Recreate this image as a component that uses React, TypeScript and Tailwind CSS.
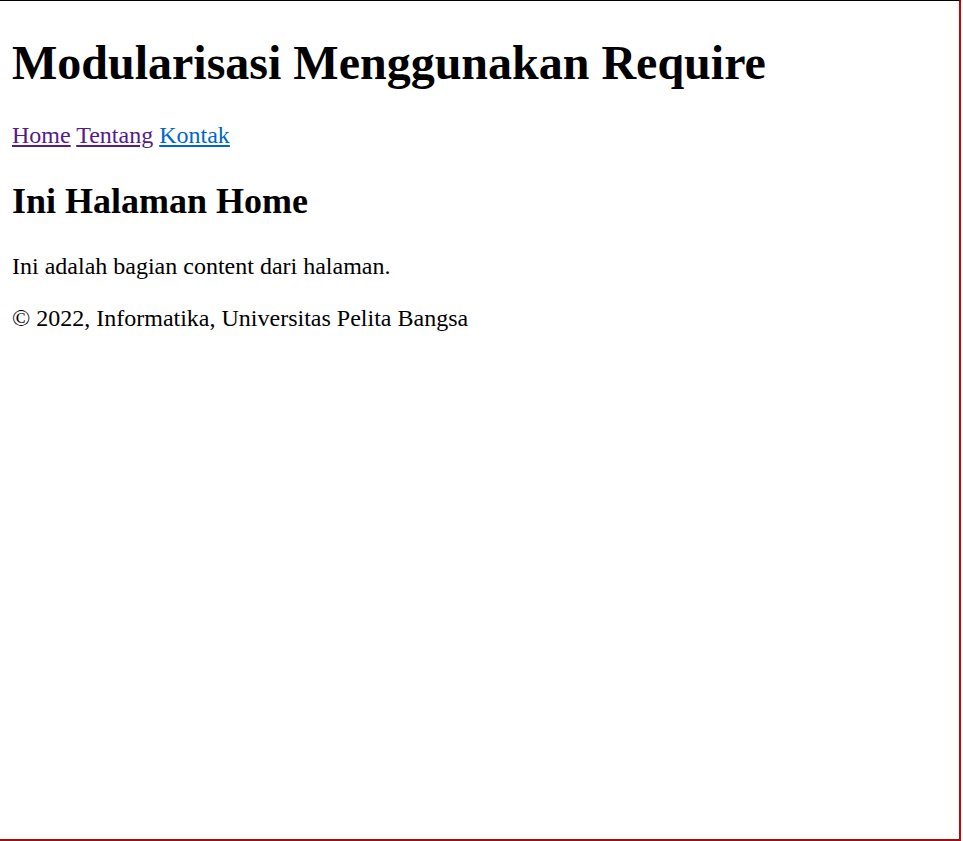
export default function App() {
  return (
    <div className="w-[961px] h-[841px] bg-white border-t border-t-black border-r-2 border-r-[#d10000] border-b-2 border-b-[#9b1111] font-['Liberation_Serif',serif] text-black text-[24px] leading-[1.15]">
      <div className="px-3">
        <h1 className="text-[48px] font-bold pt-[34px] mb-[32px]">Modularisasi Menggunakan Require</h1>
        <nav className="mb-[31px]">
          <a href="#home" className="underline text-[#551a8b]">Home</a>{" "}
          <a href="#tentang" className="underline text-[#551a8b]">Tentang</a>{" "}
          <a href="#kontak" className="underline text-[#0066cc]">Kontak</a>
        </nav>
        <h2 className="text-[36px] font-bold mb-[31px]">Ini Halaman Home</h2>
        <p className="mb-[24px]">Ini adalah bagian content dari halaman.</p>
        <p>© 2022, Informatika, Universitas Pelita Bangsa</p>
      </div>
    </div>
  );
}
